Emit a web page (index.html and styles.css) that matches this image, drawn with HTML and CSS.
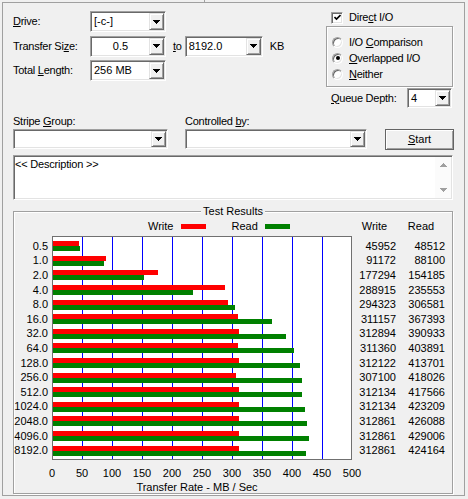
FILE: index.html
```html
<!DOCTYPE html>
<html>
<head>
<meta charset="utf-8">
<title>Disk Benchmark</title>
<link rel="stylesheet" href="styles.css">
</head>
<body>
<div class="frame">
  <div class="top">
    <div class="params">
      <span class="lbl"><u>D</u>rive:</span>
      <div class="combo w76"><span class="val">[-c-]</span><span class="drop"><svg width="7" height="4" viewBox="0 0 7 4"><path d="M0 0h7L3.5 4z"/></svg></span></div>
      <span class="lbl">Transfer Si<u>z</u>e:</span>
      <div class="range">
        <div class="combo w76"><span class="val center">0.5</span><span class="drop"><svg width="7" height="4" viewBox="0 0 7 4"><path d="M0 0h7L3.5 4z"/></svg></span></div>
        <span class="to lbl"><u>t</u>o</span>
        <div class="combo w77"><span class="val">8192.0</span><span class="drop"><svg width="7" height="4" viewBox="0 0 7 4"><path d="M0 0h7L3.5 4z"/></svg></span></div>
        <span class="kb">KB</span>
      </div>
      <span class="lbl">Total <u>L</u>ength:</span>
      <div class="combo w76"><span class="val">256 MB</span><span class="drop"><svg width="7" height="4" viewBox="0 0 7 4"><path d="M0 0h7L3.5 4z"/></svg></span></div>
    </div>
    <div class="io">
      <div class="check"><span class="cbox"><svg width="7" height="7" viewBox="0 0 7 7"><polyline points="0.5,3 2.5,5 6.5,1" fill="none" stroke="#000" stroke-width="1.6"/></svg></span><span class="lbl">Dire<u>c</u>t I/O</span></div>
      <div class="group">
        <div class="radio"><span class="rdot"></span><span class="lbl">I/O <u>C</u>omparison</span></div>
        <div class="radio"><span class="rdot on"></span><span class="lbl"><u>O</u>verlapped I/O</span></div>
        <div class="radio"><span class="rdot"></span><span class="lbl"><u>N</u>either</span></div>
      </div>
      <div class="queue"><span class="lbl"><u>Q</u>ueue Depth:</span><div class="combo w45"><span class="val">4</span><span class="drop"><svg width="7" height="4" viewBox="0 0 7 4"><path d="M0 0h7L3.5 4z"/></svg></span></div></div>
    </div>
  </div>

  <div class="row2">
    <div class="field f1"><span class="lbl">Stripe <u>G</u>roup:</span><div class="combo"><span class="val"></span><span class="drop"><svg width="7" height="4" viewBox="0 0 7 4"><path d="M0 0h7L3.5 4z"/></svg></span></div></div>
    <div class="field f2"><span class="lbl">Controlled <u>b</u>y:</span><div class="combo"><span class="val"></span><span class="drop"><svg width="7" height="4" viewBox="0 0 7 4"><path d="M0 0h7L3.5 4z"/></svg></span></div></div>
    <div class="start"><span><u>S</u>tart</span></div>
  </div>

  <div class="desc">
    <div class="dtext">&lt;&lt; Description &gt;&gt;</div>
    <div class="sb">
      <span><svg width="7" height="4" viewBox="0 0 7 4"><path d="M0 4h7L3.5 0z"/></svg></span>
      <span><svg width="7" height="4" viewBox="0 0 7 4"><path d="M0 0h7L3.5 4z"/></svg></span>
    </div>
  </div>

  <div class="results">
    <div class="rtitle">Test Results</div>
    <div class="legend">
      <span></span>
      <div class="lg"><span>Write</span><span class="sw red"></span><span class="rd">Read</span><span class="sw green"></span></div>
      <span class="hd">Write</span>
      <span class="hd">Read</span>
    </div>
    <div class="chart">
      <div class="labels">
        <span>0.5</span><span>1.0</span><span>2.0</span><span>4.0</span><span>8.0</span><span>16.0</span><span>32.0</span><span>64.0</span><span>128.0</span><span>256.0</span><span>512.0</span><span>1024.0</span><span>2048.0</span><span>4096.0</span><span>8192.0</span>
      </div>
      <div class="plot">
        <div class="bars"><i class="w" style="width:26px"></i><i class="r" style="width:27px"></i></div>
        <div class="bars"><i class="w" style="width:53px"></i><i class="r" style="width:51px"></i></div>
        <div class="bars"><i class="w" style="width:105px"></i><i class="r" style="width:91px"></i></div>
        <div class="bars"><i class="w" style="width:172px"></i><i class="r" style="width:140px"></i></div>
        <div class="bars"><i class="w" style="width:175px"></i><i class="r" style="width:182px"></i></div>
        <div class="bars"><i class="w" style="width:185px"></i><i class="r" style="width:219px"></i></div>
        <div class="bars"><i class="w" style="width:186px"></i><i class="r" style="width:233px"></i></div>
        <div class="bars"><i class="w" style="width:185px"></i><i class="r" style="width:241px"></i></div>
        <div class="bars"><i class="w" style="width:186px"></i><i class="r" style="width:247px"></i></div>
        <div class="bars"><i class="w" style="width:183px"></i><i class="r" style="width:249px"></i></div>
        <div class="bars"><i class="w" style="width:186px"></i><i class="r" style="width:249px"></i></div>
        <div class="bars"><i class="w" style="width:186px"></i><i class="r" style="width:252px"></i></div>
        <div class="bars"><i class="w" style="width:186px"></i><i class="r" style="width:254px"></i></div>
        <div class="bars"><i class="w" style="width:186px"></i><i class="r" style="width:256px"></i></div>
        <div class="bars"><i class="w" style="width:186px"></i><i class="r" style="width:253px"></i></div>
      </div>
      <div class="nums wcol">
        <span>45952</span><span>91172</span><span>177294</span><span>288915</span><span>294323</span><span>311157</span><span>312894</span><span>311360</span><span>312122</span><span>307100</span><span>312134</span><span>312134</span><span>312861</span><span>312861</span><span>312861</span>
      </div>
      <div class="nums rcol">
        <span>48512</span><span>88100</span><span>154185</span><span>235553</span><span>306581</span><span>367393</span><span>390933</span><span>403891</span><span>413701</span><span>418026</span><span>417566</span><span>423209</span><span>426088</span><span>429006</span><span>424164</span>
      </div>
    </div>
    <div class="axis">
      <span>0</span><span>50</span><span>100</span><span>150</span><span>200</span><span>250</span><span>300</span><span>350</span><span>400</span><span>450</span><span>500</span>
    </div>
    <div class="axtitle">Transfer Rate - MB / Sec</div>
  </div>
</div>
</body>
</html>
```

FILE: styles.css
```css
html, body {
  margin: 0;
  background: #f0f0f0;
}
body {
  font: 11px/13px "Liberation Sans", Arial, sans-serif;
  color: #000;
}
u { text-decoration: underline; }
.lbl { letter-spacing: -0.25px; }

.frame {
  position: relative;
  margin: 2px 0 0 2px;
  width: 463px;
  height: 494px;
  box-sizing: border-box;
  border: 1px solid #a0a0a0;
}
.frame::before {
  content: "";
  position: absolute;
  left: 201px;
  top: -3px;
  width: 1px;
  height: 2px;
  background: #a0a0a0;
}

/* sunken 3D field */
.combo, .cbox, .rdot, .desc {
  background: #fff;
  border: 1px solid;
  border-color: #a0a0a0 #fff #fff #a0a0a0;
  box-shadow: inset 1px 1px #696969, inset -1px -1px #e3e3e3;
  box-sizing: border-box;
}

.top {
  display: flex;
  height: 104px;
  margin-top: 8px;
  padding-left: 10px;
}
.params {
  width: 313px;
  display: grid;
  grid-template-columns: 77px auto;
  grid-auto-rows: 21px;
  row-gap: 3.5px;
  align-items: center;
  align-content: start;
}
.range {
  display: flex;
  align-items: center;
}
.combo {
  display: flex;
  height: 21px;
  padding: 1px;
}
.w76 { width: 76px; }
.w77 { width: 78px; }
.w45 { width: 45px; }
.val {
  flex: 1;
  padding-left: 2px;
  line-height: 17px;
  white-space: nowrap;
  overflow: hidden;
}
.val.center { text-align: center; padding-left: 0; }
.drop {
  width: 15px;
  flex: none;
  box-sizing: border-box;
  background: #f0f0f0;
  border: 1px solid;
  border-color: #e3e3e3 #696969 #696969 #e3e3e3;
  box-shadow: inset 1px 1px #fff, inset -1px -1px #a0a0a0;
  display: flex;
  align-items: center;
  justify-content: center;
}
.drop svg, .sb svg { display: block; shape-rendering: crispEdges; }
.to { margin: 0 3px 0 7px; }
.kb { margin-left: 7px; }

.io {
  width: 127px;
  display: flex;
  flex-direction: column;
}
.check {
  display: flex;
  align-items: center;
  height: 13px;
  padding-left: 5px;
}
.cbox {
  width: 12px;
  height: 12px;
  margin-right: 6px;
  display: flex;
  align-items: center;
  justify-content: center;
}
.cbox svg { display: block; }
.group {
  margin-top: 2px;
  height: 61px;
  box-sizing: border-box;
  border: 1px solid #a0a0a0;
  box-shadow: inset 1px 1px #fff, 1px 1px #fff;
  padding: 7px 0 0 5px;
}
.radio {
  display: flex;
  align-items: center;
  height: 16px;
}
.rdot {
  width: 11px;
  height: 11px;
  border-radius: 50%;
  margin-right: 6px;
  display: flex;
  align-items: center;
  justify-content: center;
}
.rdot.on::after {
  content: "";
  width: 4px;
  height: 4px;
  border-radius: 50%;
  background: #000;
}
.queue {
  margin-top: 1px;
  display: flex;
  align-items: center;
  padding-left: 5px;
}
.queue .combo {
  margin-left: auto;
  margin-right: 1px;
  height: 20px;
}

.row2 {
  display: flex;
  align-items: flex-start;
  height: 34px;
  padding-left: 10px;
}
.field {
  display: flex;
  flex-direction: column;
}
.field .combo {
  margin-top: 1px;
  height: 20px;
}
.f1 { width: 155px; }
.f2 { width: 182px; margin-left: 17px; }
.start {
  margin: 14px 0 0 18px;
  width: 69px;
  height: 21px;
  box-sizing: border-box;
  border: 1px solid #646464;
  box-shadow: inset 1px 1px #fff, inset -1px -1px #a0a0a0;
  display: flex;
  align-items: center;
  justify-content: center;
}

.desc {
  margin: 6px 0 0 10px;
  width: 440px;
  height: 45px;
  display: flex;
  padding: 1px;
}
.dtext {
  flex: 1;
  padding: 1px 0 0 0;
  letter-spacing: -0.2px;
}
.sb {
  width: 16px;
  display: flex;
  flex-direction: column;
  justify-content: space-between;
  background: #fbfbfb;
}
.sb span {
  height: 16px;
  display: flex;
  align-items: center;
  justify-content: center;
}
.sb path { fill: #a0a0a0; }

.results {
  margin: 11px 0 0 10px;
  width: 440px;
  height: 283px;
  box-sizing: border-box;
  border: 1px solid #a0a0a0;
  box-shadow: inset 1px 1px #fff, 1px 1px #fff;
}
.rtitle {
  display: table;
  margin: -7px auto 0;
  padding: 0 2px;
  background: #f0f0f0;
}
.legend {
  display: grid;
  grid-template-columns: 38px 300px 45px 48px;
  margin-top: 2px;
  height: 13px;
}
.lg {
  display: flex;
  align-items: center;
  padding-left: 96px;
}
.sw {
  width: 25px;
  height: 5px;
}
.sw.red { background: #ff0000; margin-left: 8px; }
.sw.green { background: #008000; margin-left: 7px; }
.rd { margin-left: 25px; }
.hd { text-align: center; }

.chart {
  display: flex;
  height: 224px;
  margin-top: 3px;
}
.labels, .nums {
  box-sizing: border-box;
  display: grid;
  grid-template-rows: repeat(15, 1fr);
  align-items: center;
  justify-items: end;
  padding: 3px 0 2px;
  line-height: 11px;
  white-space: nowrap;
}
.labels { width: 38px; padding-right: 4px; }
.wcol { width: 45px; padding-right: 1px; }
.rcol { width: 48px; }
.plot {
  width: 300px;
  box-sizing: border-box;
  border: 1px solid #707070;
  padding: 2px 0 1px;
  background-color: #fff;
  background-image: linear-gradient(to right, transparent 29px, #0000ff 29px, #0000ff 30px, transparent 30px);
  background-size: 30px 100%;
  background-repeat: repeat-x;
  display: grid;
  grid-template-rows: repeat(15, 1fr);
}
.bars {
  display: flex;
  flex-direction: column;
  justify-content: center;
}
.bars i {
  display: block;
  height: 5px;
}
.bars .w { background: #ff0000; }
.bars .r { background: #008000; }

.axis {
  display: flex;
  margin: 7px 0 0 23px;
}
.axis span {
  width: 30px;
  flex: none;
  text-align: center;
}
.axtitle {
  margin: 1px 0 0 23px;
  width: 320px;
  text-align: center;
}
```
